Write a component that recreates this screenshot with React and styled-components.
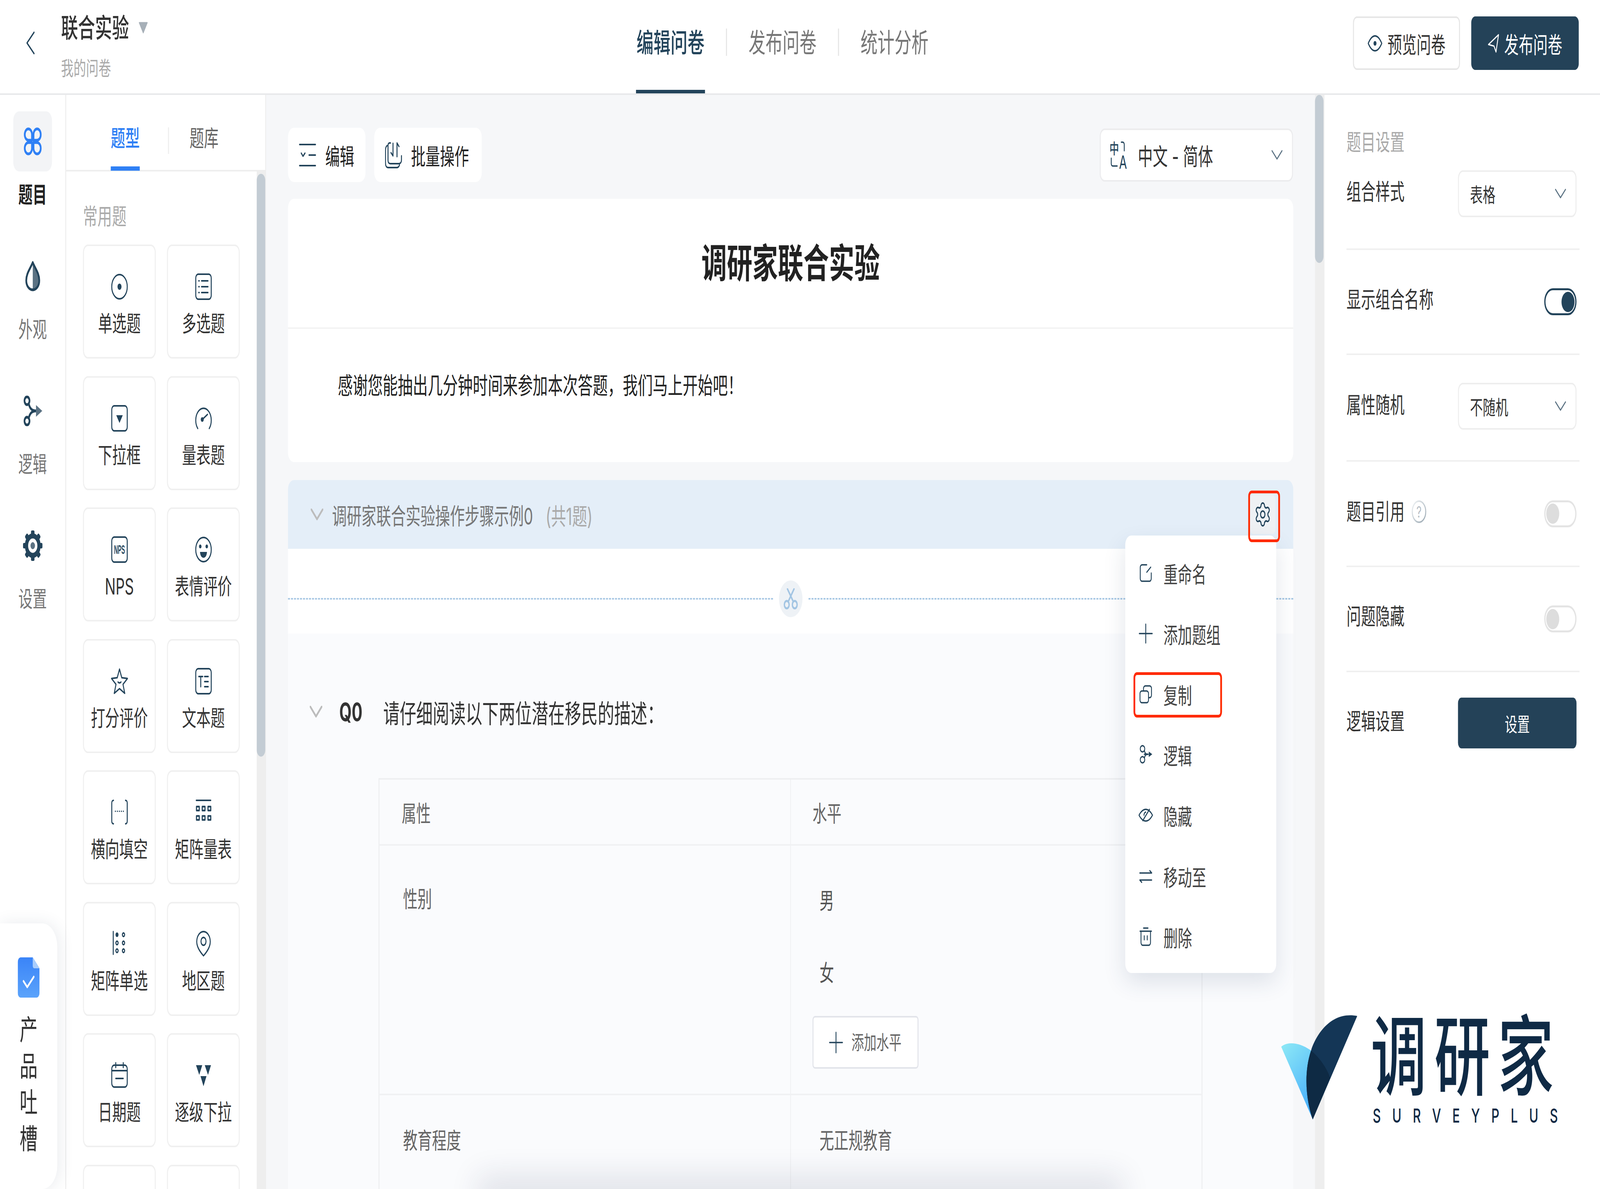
import React, { useState } from 'react';
import styled, { createGlobalStyle } from 'styled-components';
import { Settings } from 'lucide-react';

const INK = '#23445b';
const MID = '#5b7283';
const DESIGN_W = 6400;
const DESIGN_H = 3044;

const Global = createGlobalStyle`
  html, body { margin: 0; padding: 0; background: #fff; overflow: hidden; }
  * { box-sizing: border-box; }
  body { font-family: Inter, "Noto Sans CJK SC", sans-serif; color: #333; }
`;

/* The sandbox clamps the window below 6400px wide. The page is laid out at the
   reference's 6400x3044 and fitted to the window; at a real 6400x3044 window the
   factors are exactly 1. */
const Stage = styled.div`
  width: 100vw;
  height: 100vh;
  overflow: hidden;
`;
const Page = styled.div`
  position: relative;
  width: ${DESIGN_W}px;
  height: ${DESIGN_H}px;
  overflow: hidden;
  display: flex;
  flex-direction: column;
  background: #fff;
  transform-origin: 0 0;
`;

/* ---------- top bar ---------- */
const Header = styled.header`
  display: grid;
  grid-template-columns: 2544px auto 1fr;
  height: 243px;
  flex: none;
  border-bottom: 4px solid #e8e9eb;
  background: #fff;
`;
const HeadLeft = styled.div`
  display: flex;
  align-items: flex-start;
`;
const BackBtn = styled.div`
  width: 244px;
  height: 220px;
  display: flex;
  align-items: center;
  justify-content: center;
  svg { display: block; }
`;
const TitleBlock = styled.div`
  display: flex;
  flex-direction: column;
  padding-top: 31px;
`;
const TitleRow = styled.div`
  display: flex;
  align-items: center;
  gap: 38px;
  height: 80px;
`;
const DocTitle = styled.div`
  font-size: 68px;
  line-height: 80px;
  font-weight: 500;
  color: #333;
`;
const DocSub = styled.div`
  margin-top: 34px;
  font-size: 50px;
  line-height: 60px;
  color: #aaa;
`;
const StepTabs = styled.nav`
  display: flex;
  align-items: center;
  height: 239px;
`;
const StepTab = styled.div`
  height: 239px;
  padding: 0 2px 12px;
  display: flex;
  align-items: center;
  font-size: 68px;
  line-height: 80px;
  font-weight: ${p => (p.$active ? 500 : 400)};
  color: ${p => (p.$active ? INK : '#777')};
  border-bottom: 9px solid ${p => (p.$active ? INK : 'transparent')};
`;
const StepDivider = styled.span`
  width: 4px;
  height: 70px;
  margin: 0 84px 23px;
  background: #e4e4e4;
`;
const HeadRight = styled.div`
  display: flex;
  justify-content: flex-end;
  align-items: flex-start;
  gap: 45px;
  padding: 42px 85px 0 0;
`;
const HeadBtn = styled.div`
  width: ${p => p.$w}px;
  height: 137px;
  display: flex;
  align-items: center;
  justify-content: center;
  gap: 20px;
  border-radius: 16px;
  font-size: 58px;
  background: ${p => (p.$primary ? '#244258' : '#fff')};
  color: ${p => (p.$primary ? '#fff' : '#333')};
  border: ${p => (p.$primary ? 'none' : '4px solid #e6e6e6')};
`;

/* ---------- main ---------- */
const Main = styled.main`
  flex: 1;
  min-height: 0;
  display: flex;
`;

/* left rail */
const Rail = styled.aside`
  position: relative;
  width: 265px;
  flex: none;
  padding-top: 42px;
  border-right: 4px solid #eeeeee;
  display: flex;
  flex-direction: column;
  align-items: stretch;
`;
const RailItem = styled.div`
  height: 345px;
  display: flex;
  flex-direction: column;
  align-items: center;
`;
const RailIcon = styled.div`
  width: 155px;
  height: 154px;
  border-radius: 24px;
  display: flex;
  align-items: center;
  justify-content: center;
  background: ${p => (p.$active ? '#f3f4f6' : 'transparent')};
`;
const RailLabel = styled.div`
  margin-top: 25px;
  font-size: 57px;
  line-height: 70px;
  font-weight: ${p => (p.$active ? 700 : 400)};
  color: ${p => (p.$active ? '#222' : '#777')};
`;
const Feedback = styled.div`
  position: absolute;
  left: 0;
  bottom: 0;
  width: 229px;
  height: 680px;
  padding-top: 87px;
  background: #fff;
  border-radius: 0 60px 60px 0;
  box-shadow: 6px 0 50px rgba(40, 60, 90, 0.1);
  display: flex;
  flex-direction: column;
  align-items: center;
  z-index: 3;
`;
const FeedbackText = styled.div`
  margin-top: 35px;
  width: 72px;
  font-size: 72px;
  line-height: 93px;
  text-align: center;
  color: #333;
`;

/* question types panel */
const TypesPanel = styled.section`
  width: 800px;
  flex: none;
  display: flex;
  flex-direction: column;
  border-right: 4px solid #eeeeee;
  background: #fff;
`;
const TypesTabs = styled.div`
  height: 196px;
  flex: none;
  display: flex;
  align-items: flex-end;
  padding-left: 178px;
  border-bottom: 4px solid #eeeeee;
`;
const TypesTab = styled.div`
  height: 156px;
  margin-bottom: -2px;
  padding-bottom: 8px;
  display: flex;
  align-items: center;
  font-size: 58px;
  color: ${p => (p.$active ? '#2f80f5' : '#666')};
  font-weight: ${p => (p.$active ? 500 : 400)};
  border-bottom: 11px solid ${p => (p.$active ? '#2f80f5' : 'transparent')};
`;
const TypesDivider = styled.span`
  width: 4px;
  height: 68px;
  margin: 0 82px 41px 113px;
  background: #eeeeee;
`;
const TypesBody = styled.div`
  flex: 1;
  min-height: 0;
  display: flex;
`;
const TypesScroll = styled.div`
  flex: 1;
  padding: 80px 0 0 67px;
  overflow: hidden;
`;
const SectionLabel = styled.div`
  font-size: 58px;
  line-height: 70px;
  color: #aaa;
`;
const TypeGrid = styled.div`
  margin-top: 37px;
  display: grid;
  grid-template-columns: 291px 291px;
  grid-auto-rows: 292px;
  column-gap: 45px;
  row-gap: 44.5px;
`;
const TypeCard = styled.div`
  border: 4px solid #f0f0f0;
  border-radius: 20px;
  padding-top: 70px;
  display: flex;
  flex-direction: column;
  align-items: center;
  svg { display: block; flex: none; }
`;
const TypeName = styled.div`
  margin-top: 26px;
  font-size: 57px;
  line-height: 70px;
  color: #333;
  white-space: nowrap;
`;
const Scrollbar = styled.div`
  width: ${p => p.$w}px;
  flex: none;
  background: #eeeeee;
  padding-top: ${p => p.$top}px;
`;
const ScrollThumb = styled.div`
  width: 34px;
  height: ${p => p.$h}px;
  border-radius: 17px;
  background: #c3ccd4;
`;

/* editor */
const Editor = styled.section`
  flex: 1;
  min-width: 0;
  display: flex;
  background: #f6f7f9;
`;
const EditorScroll = styled.div`
  flex: 1;
  min-width: 0;
  padding: 84px 87px 0;
  overflow: hidden;
`;
const Toolbar = styled.div`
  display: flex;
  align-items: center;
  height: 139px;
  gap: 35px;
`;
const ToolBtn = styled.div`
  width: ${p => p.$w}px;
  height: 139px;
  background: #fff;
  border-radius: 24px;
  display: flex;
  align-items: center;
  gap: ${p => p.$gap}px;
  padding-left: ${p => p.$pad}px;
  font-size: 58px;
  color: #222;
`;
const LangSelect = styled.div`
  margin-left: auto;
  margin-right: 1px;
  width: 773px;
  height: 136px;
  background: #fff;
  border: 4px solid #ececee;
  border-radius: 20px;
  display: flex;
  align-items: center;
  padding: 0 38px 0 36px;
  font-size: 60px;
  color: #333;
`;
const LangText = styled.span`
  margin-left: 40px;
  flex: 1;
`;
const InfoCard = styled.div`
  margin-top: 43px;
  background: #fff;
  border-radius: 24px;
  height: 674px;
`;
const InfoTitle = styled.h1`
  margin: 0;
  height: 333px;
  border-bottom: 4px solid #f3f3f3;
  display: flex;
  align-items: center;
  justify-content: center;
  font-size: 102px;
  line-height: 120px;
  font-weight: 700;
  color: #222;
`;
const InfoText = styled.p`
  margin: 0;
  padding: 115px 0 0 199px;
  font-size: 60px;
  line-height: 60px;
  color: #222;
`;
const Group = styled.div`
  position: relative;
  margin-top: 46px;
`;
const GroupBar = styled.div`
  height: 176px;
  padding: 0 72px 0 91px;
  border-radius: 24px 24px 0 0;
  background: #e4eef8;
  display: flex;
  align-items: center;
`;
const GroupName = styled.span`
  margin-left: 35px;
  font-size: 59px;
  color: #777;
`;
const GroupCount = styled.span`
  margin-left: 50px;
  font-size: 60px;
  color: #aaa;
`;
const GearBtn = styled.div`
  position: relative;
  margin-left: auto;
  width: 100px;
  height: 100px;
  border-radius: 12px;
  background: #eef1f4;
  display: flex;
  align-items: center;
  justify-content: center;
`;
const RedBox = styled.span`
  position: absolute;
  left: ${p => p.$l}px;
  top: ${p => p.$t}px;
  width: ${p => p.$w}px;
  height: ${p => p.$h}px;
  border: 7px solid #ff2a00;
  border-radius: 14px;
  z-index: 6;
  pointer-events: none;
`;
const SplitRow = styled.div`
  height: 217px;
  background: #fff;
  padding-top: 81px;
  display: flex;
  align-items: flex-start;
`;
const DashLine = styled.span`
  flex: 1;
  margin-top: 45px;
  border-top: 4px dashed #a8c8e4;
`;
const CutBadge = styled.span`
  width: 94px;
  height: 94px;
  margin: 0 24px;
  border-radius: 50%;
  background: #eef2f6;
  display: flex;
  align-items: center;
  justify-content: center;
`;
const Question = styled.div`
  background: #fafbfd;
  padding: 150px 0 0 87px;
  height: 1500px;
`;
const QRow = styled.div`
  display: flex;
  align-items: center;
  height: 100px;
`;
const QNum = styled.span`
  margin-left: 68px;
  width: 176px;
  font-size: 64px;
  font-weight: 700;
  color: #333;
`;
const QText = styled.span`
  font-size: 66px;
  color: #333;
`;
const Table = styled.div`
  margin: 120px 0 0 275px;
  width: 3296px;
  border: solid #eeeff1;
  border-width: 4px 4px 0 4px;
`;
const TableRow = styled.div`
  display: grid;
  grid-template-columns: 1643px 1fr;
  min-height: ${p => p.$h}px;
  border-bottom: 4px solid #f0f1f3;
`;
const TableCell = styled.div`
  padding: ${p => p.$top}px 0 0 ${p => p.$left}px;
  font-size: 58px;
  line-height: 70px;
  color: #666;
  & + & { border-left: 3px solid #f0f1f3; }
`;
const LevelOption = styled.div`
  height: 185px;
  padding-left: 28px;
  display: flex;
  align-items: center;
  color: #555;
`;
const AddBtn = styled.div`
  margin-top: 18px;
  width: 424px;
  height: 135px;
  padding-left: 62px;
  background: #fff;
  border: 4px solid #e2e4ea;
  border-radius: 10px;
  display: flex;
  align-items: center;
  gap: 34px;
  font-size: 50px;
  color: #666;
`;

/* group menu */
const Menu = styled.div`
  position: absolute;
  left: 3349px;
  top: 142px;
  width: 604px;
  height: 1120px;
  padding-top: 18px;
  background: #fff;
  border-radius: 24px;
  box-shadow: 0 24px 70px rgba(40, 60, 100, 0.13);
  z-index: 5;
`;
const MenuItem = styled.div`
  position: relative;
  height: 155.2px;
  padding-left: 52px;
  display: flex;
  align-items: center;
  gap: 41px;
  font-size: 57px;
  color: #444;
`;
const MenuIcon = styled.span`
  width: 60px;
  display: flex;
  justify-content: center;
`;

/* settings */
const SettingsPanel = styled.aside`
  width: 1102px;
  flex: none;
  padding: 91px 82px 0 88px;
  background: #fff;
`;
const SettingsTitle = styled.div`
  font-size: 58px;
  line-height: 60px;
  color: #aaa;
`;
const SettingRow = styled.div`
  display: flex;
  align-items: center;
  justify-content: space-between;
  height: ${p => p.$h}px;
  padding: ${p => p.$pt || 0}px 12px ${p => p.$pb || 0}px 0;
  border-bottom: ${p => (p.$last ? 'none' : '4px solid #f0f0f0')};
`;
const SettingLabel = styled.div`
  display: flex;
  align-items: center;
  gap: 28px;
  padding-bottom: ${p => p.$up || 0}px;
  font-size: 58px;
  line-height: 70px;
  color: #333;
`;
const SelectBox = styled.div`
  width: 474px;
  height: 120px;
  margin-bottom: ${p => p.$mb || 0}px;
  border: 4px solid #eeeeee;
  border-radius: 20px;
  padding: 0 38px 0 44px;
  display: flex;
  align-items: center;
  justify-content: space-between;
  font-size: 51px;
  color: #333;
`;
const Toggle = styled.div`
  width: 129px;
  height: 69px;
  border-radius: 35px;
  border: 5px solid ${p => (p.$on ? INK : '#e4e4e4')};
  display: flex;
  align-items: center;
  justify-content: ${p => (p.$on ? 'flex-end' : 'flex-start')};
  padding: 0 3px;
`;
const Knob = styled.span`
  width: 52px;
  height: 52px;
  border-radius: 50%;
  background: ${p => (p.$on ? INK : '#dddddd')};
`;
const PrimaryBtn = styled.div`
  width: 474px;
  height: 130px;
  border-radius: 14px;
  background: #244258;
  color: #fff;
  font-size: 50px;
  display: flex;
  align-items: center;
  justify-content: center;
`;

/* watermark */
const Logo = styled.div`
  position: absolute;
  left: 5125px;
  top: 2598px;
  display: flex;
  gap: 62px;
  z-index: 8;
`;
const LogoWords = styled.div`
  display: flex;
  flex-direction: column;
  width: 770px;
`;
const LogoCn = styled.div`
  margin-left: -8px;
  font-size: 224px;
  line-height: 214px;
  letter-spacing: 30px;
  font-weight: 500;
  color: #0f2a45;
  white-space: nowrap;
`;
const LogoEn = styled.div`
  margin-top: 22px;
  font-size: 50px;
  line-height: 44px;
  font-weight: 500;
  letter-spacing: 45.5px;
  color: #0f2a45;
  white-space: nowrap;
`;
const BottomHaze = styled.div`
  position: absolute;
  left: 1950px;
  bottom: -30px;
  width: 2500px;
  height: 30px;
  box-shadow: 0 0 90px 40px rgba(30, 40, 80, 0.1);
  z-index: 2;
`;

/* ---------- icons ---------- */
const Ico = ({ w = 68, h, children, ...rest }) => (
  <svg width={w} height={h || w} viewBox={`0 0 ${w} ${h || w}`} fill="none" stroke={INK} strokeWidth="4" strokeLinecap="round" strokeLinejoin="round" {...rest}>
    {children}
  </svg>
);

const Chevron = ({ w = 44, h = 26, color = MID, sw = 3.5 }) => (
  <svg width={w} height={h} viewBox={`0 0 ${w} ${h}`} fill="none" stroke={color} strokeWidth={sw} strokeLinecap="round" strokeLinejoin="round">
    <polyline points={`2,2 ${w / 2},${h - 3} ${w - 2},2`} />
  </svg>
);

const Clover = () => (
  <svg width="72" height="72" viewBox="0 0 72 72" fill="none" stroke="#2f80f5" strokeWidth="7" strokeLinejoin="round">
    <path d="M33 33 V18 A14.5 14.5 0 1 0 18 33 Z" />
    <path d="M39 33 V18 A14.5 14.5 0 1 1 54 33 Z" />
    <path d="M33 39 V54 A14.5 14.5 0 1 1 18 39 Z" />
    <path d="M39 39 V54 A14.5 14.5 0 1 0 54 39 Z" />
  </svg>
);
const Drop = () => (
  <svg width="60" height="78" viewBox="0 0 60 78" fill="none">
    <path d="M30 4 C40 20 56 32 56 50 C56 64 44 74 30 74 Z" fill={MID} />
    <path d="M30 4 C20 20 4 32 4 50 C4 64 16 74 30 74 C44 74 56 64 56 50 C56 32 40 20 30 4 Z" stroke={INK} strokeWidth="7" strokeLinejoin="round" />
  </svg>
);
const LogicIcon = () => (
  <svg width="76" height="78" viewBox="0 0 76 78" fill="none">
    <circle cx="15" cy="13" r="10" stroke={INK} strokeWidth="7" />
    <circle cx="15" cy="65" r="10" stroke={INK} strokeWidth="7" />
    <path d="M22 20 C26 34 36 39 52 39 C36 39 26 44 22 58" stroke={INK} strokeWidth="7" />
    <path d="M51 24 L76 39 L51 54 Z" fill={MID} />
  </svg>
);
const GearSolid = () => (
  <svg width="78" height="78" viewBox="0 0 78 78" fill="none">
    {[0, 45, 90, 135, 180, 225, 270, 315].map(a => (
      <rect key={a} x="32" y="0" width="14" height="16" rx="4" fill={INK} transform={`rotate(${a} 39 39)`} />
    ))}
    <circle cx="39" cy="39" r="25" stroke={INK} strokeWidth="13" />
    <circle cx="39" cy="39" r="9" fill={MID} />
  </svg>
);
const FileCheck = () => (
  <svg width="87" height="103" viewBox="0 0 87 103" fill="none">
    <defs>
      <linearGradient id="fileGrad" x1="0" y1="0" x2="0" y2="1">
        <stop offset="0" stopColor="#3a84f8" />
        <stop offset="1" stopColor="#5ba3fb" />
      </linearGradient>
    </defs>
    <path d="M12 0 H60 L87 28 V91 A12 12 0 0 1 75 103 H12 A12 12 0 0 1 0 91 V12 A12 12 0 0 1 12 0 Z" fill="url(#fileGrad)" />
    <path d="M60 0 L87 28 H66 A6 6 0 0 1 60 22 Z" fill="#a9cdfc" />
    <path d="M23 61 L38 76 L64 50" stroke="#fff" strokeWidth="6" strokeLinecap="round" strokeLinejoin="round" />
  </svg>
);

const IRect = () => <rect x="3" y="2" width="62" height="64" rx="10" />;
const typeIcons = {
  radio: <Ico><circle cx="34" cy="34" r="31" /><circle cx="34" cy="34" r="8" fill={INK} stroke="none" /></Ico>,
  multi: <Ico><IRect /><path d="M26 19 H52 M26 34 H52 M26 49 H52" /><path d="M15 19 H17 M15 34 H17 M15 49 H17" /></Ico>,
  drop: <Ico><IRect /><path d="M21 26 H47 L34 46 Z" fill={INK} stroke="none" /></Ico>,
  gauge: <Ico><path d="M11 60 A31 31 0 1 1 57 60" /><path d="M29 37 L50 24" /><circle cx="29" cy="37" r="6" fill={INK} stroke="none" /></Ico>,
  nps: <Ico overflow="visible"><IRect /><g transform="translate(34 45) scale(0.66 1)"><text x="0" y="0" fill={INK} stroke="none" fontFamily="'Liberation Sans', sans-serif" fontWeight="700" fontSize="32" textAnchor="middle">NPS</text></g></Ico>,
  smile: <Ico><circle cx="34" cy="34" r="31" /><circle cx="21" cy="26" r="5" fill={INK} stroke="none" /><circle cx="47" cy="26" r="5" fill={INK} stroke="none" /><path d="M20 40 H48 C47 50 41 55 34 55 C27 55 21 50 20 40 Z" fill={INK} stroke="none" /></Ico>,
  star: <Ico><path d="M34 3 L43 25 L66 27 L48 42 L55 65 L34 53 L13 65 L20 42 L2 27 L25 25 Z" /><path d="M28 36 C30 39 38 39 40 36" /></Ico>,
  text: <Ico><IRect /><path d="M15 22 H31 M23 22 V48 M38 22 H53 M38 35 H53 M38 48 H53" /></Ico>,
  blank: <Ico><path d="M10 3 C6 3 3 6 3 10 V56 C3 60 6 63 10 63 M58 3 C62 3 65 6 65 10 V56 C65 60 62 63 58 63" /><path d="M17 31 H18 M25 31 H26 M33 31 H34 M41 31 H42 M49 31 H50" strokeWidth="3.5" /></Ico>,
  matrix: <Ico><path d="M5 3 H63" /><g strokeWidth="4.5"><rect x="6" y="19" width="11" height="10" /><rect x="29" y="19" width="11" height="10" /><rect x="52" y="19" width="11" height="10" /><rect x="6" y="43" width="11" height="10" /><rect x="29" y="43" width="11" height="10" /><rect x="52" y="43" width="11" height="10" /></g></Ico>,
  matrixR: <Ico><path d="M9 2 V60" /><circle cx="24" cy="10" r="6" fill={INK} stroke="none" /><circle cx="50" cy="10" r="4.5" /><circle cx="24" cy="31" r="4.5" /><circle cx="50" cy="31" r="4.5" /><circle cx="24" cy="51" r="4.5" /><circle cx="50" cy="51" r="4.5" /></Ico>,
  pin: <Ico><path d="M34 64 C26 58 7 44 7 28 A27 26 0 0 1 61 28 C61 44 42 58 34 64 Z" /><circle cx="34" cy="27" r="10" /></Ico>,
  date: <Ico><rect x="3" y="8" width="62" height="56" rx="10" /><path d="M3 22 H65 M19 2 V14 M49 2 V14 M19 42 H49" /></Ico>,
  casc: <Ico><path d="M4 8 H29 L17 33 Z M39 8 H64 L52 33 Z M22 36 H46 L34 62 Z" fill={INK} stroke="none" /></Ico>,
};

const Scissors = () => (
  <svg width="58" height="54" viewBox="0 0 58 54" fill="none" stroke="#a3c5e3" strokeWidth="5.5" strokeLinecap="round">
    <circle cx="13" cy="42" r="9.5" />
    <circle cx="45" cy="42" r="9.5" />
    <path d="M19 34 L42 2 M39 34 L16 2" />
  </svg>
);

const menuIcons = {
  rename: <Ico w={52} strokeWidth="3.5"><path d="M30 5 H11 A7 7 0 0 0 4 12 V40 A7 7 0 0 0 11 47 H41 A7 7 0 0 0 48 40 V26" /><path d="M30 24 L46 11" /></Ico>,
  add: <Ico w={56} strokeWidth="3.5"><path d="M28 4 V52 M2 28 H54" /></Ico>,
  copy: <Ico w={52} strokeWidth="3.5"><rect x="3" y="18" width="34" height="30" rx="7" /><path d="M17 17 V12 A7 7 0 0 1 24 5 H42 A7 7 0 0 1 49 12 V28 A7 7 0 0 1 42 35 H38" /></Ico>,
  logic: <Ico w={52} strokeWidth="3.5"><ellipse cx="13" cy="11" rx="9" ry="8" /><ellipse cx="13" cy="39" rx="9" ry="8" /><path d="M21 16 C23 24 28 25 36 25 H20" /><path d="M21 34 C23 28 26 25 34 25" /><path d="M38 18 L52 25 L38 32 Z" fill={INK} stroke="none" /></Ico>,
  hide: <Ico w={60} h={44} strokeWidth="3.5"><path d="M3 22 C12 11 20 7 30 7 C40 7 48 11 57 22 C48 33 40 37 30 37 C20 37 12 33 3 22 Z" /><path d="M18 36 L45 7" /><path d="M23 22 A8 8 0 0 1 30 14" /></Ico>,
  move: <Ico w={52} h={40} strokeWidth="3.5"><path d="M2 12 H50 L42 6" /><path d="M50 30 H2 L10 36" /></Ico>,
  del: <Ico w={52} strokeWidth="3.5"><path d="M3 12 H49 M17 4 H35" /><path d="M7 12 V41 A7 7 0 0 0 14 48 H38 A7 7 0 0 0 45 41 V12" /><path d="M20 24 V34 M32 24 V34" /></Ico>,
};

const Translate = () => (
  <svg width="72" height="72" viewBox="0 0 72 72" fill="none" stroke={INK} strokeWidth="3.5" strokeLinecap="round" overflow="visible">
    <text x="-1" y="33" fill={INK} stroke="none" fontFamily="'Noto Sans CJK SC', sans-serif" fontSize="38" fontWeight="500">中</text>
    <text x="37" y="71" fill={INK} stroke="none" fontFamily="Inter, sans-serif" fontSize="46">A</text>
    <path d="M46 3 H52 A6 6 0 0 1 58 9 V25" />
    <path d="M6 44 V58 A6 6 0 0 0 12 64 H30" />
  </svg>
);

const LogoMark = () => (
  <svg width="304" height="268" viewBox="0 0 304 268">
    <defs>
      <linearGradient id="bladeL" x1="0.1" y1="0" x2="0.7" y2="0.8">
        <stop offset="0" stopColor="#8ae6f6" />
        <stop offset="1" stopColor="#47aefb" />
      </linearGradient>
      <clipPath id="bladeClip">
        <path d="M126 268 C100 220 88 150 120 90 C140 50 200 -10 304 3 Z" />
      </clipPath>
    </defs>
    <path d="M0 82 C15 72 60 65 118 91 C155 110 185 140 195 161 L126 268 Z" fill="url(#bladeL)" />
    <path d="M126 268 C100 220 88 150 120 90 C140 50 200 -10 304 3 Z" fill="#143656" />
    <path d="M0 82 C15 72 60 65 118 91 C155 110 185 140 195 161 L126 268 Z" fill="#0e2a44" clipPath="url(#bladeClip)" />
  </svg>
);

const Help = () => (
  <svg width="60" height="62" viewBox="0 0 60 62" fill="none" overflow="visible">
    <defs>
      <linearGradient id="helpGrad" x1="0" y1="0" x2="1" y2="1">
        <stop offset="0" stopColor="#f1f4f6" />
        <stop offset="1" stopColor="#9aa8b2" />
      </linearGradient>
    </defs>
    <circle cx="30" cy="31" r="27" stroke="url(#helpGrad)" strokeWidth="4" />
    <text x="30" y="46" fill="#b4bcc4" fontFamily="Inter, sans-serif" fontSize="40" textAnchor="middle">?</text>
  </svg>
);

/* ---------- data ---------- */
const TYPES = [
  ['radio', '单选题'], ['multi', '多选题'],
  ['drop', '下拉框'], ['gauge', '量表题'],
  ['nps', 'NPS'], ['smile', '表情评价'],
  ['star', '打分评价'], ['text', '文本题'],
  ['blank', '横向填空'], ['matrix', '矩阵量表'],
  ['matrixR', '矩阵单选'], ['pin', '地区题'],
  ['date', '日期题'], ['casc', '逐级下拉'],
  [null, ''], [null, ''],
];
const MENU = [
  ['rename', '重命名'], ['add', '添加题组'], ['copy', '复制'], ['logic', '逻辑'],
  ['hide', '隐藏'], ['move', '移动至'], ['del', '删除'],
];

export default function App() {
  const [fit] = useState(() => ({ x: window.innerWidth / DESIGN_W, y: window.innerHeight / DESIGN_H }));
  return (
    <Stage>
      <Global />
      <Page style={{ transform: `scale(${fit.x}, ${fit.y})` }}>
        <Header>
          <HeadLeft>
            <BackBtn>
              <Ico w={34} h={60} strokeWidth="4.5"><polyline points="31,3 3,30 31,57" /></Ico>
            </BackBtn>
            <TitleBlock>
              <TitleRow>
                <DocTitle>联合实验</DocTitle>
                <svg width="38" height="30" viewBox="0 0 38 30"><path d="M3 2 H35 L19 28 Z" fill="#a7b0b8" stroke="#a7b0b8" strokeWidth="3" strokeLinejoin="round" /></svg>
              </TitleRow>
              <DocSub>我的问卷</DocSub>
            </TitleBlock>
          </HeadLeft>
          <StepTabs>
            <StepTab $active>编辑问卷</StepTab>
            <StepDivider />
            <StepTab>发布问卷</StepTab>
            <StepDivider />
            <StepTab>统计分析</StepTab>
          </StepTabs>
          <HeadRight>
            <HeadBtn $w={428}>
              <Ico w={60} h={46}><path d="M3 23 C12 9 21 4 30 4 C39 4 48 9 57 23 C48 37 39 42 30 42 C21 42 12 37 3 23 Z" /><circle cx="30" cy="23" r="6" fill={INK} stroke="none" /></Ico>
              预览问卷
            </HeadBtn>
            <HeadBtn $w={430} $primary>
              <svg width="46" height="50" viewBox="0 0 46 50" fill="none" stroke="#fff" strokeWidth="3.5" strokeLinejoin="round"><path d="M43 3 L3 28 L25 32 L33 47 Z" /></svg>
              发布问卷
            </HeadBtn>
          </HeadRight>
        </Header>

        <Main>
          <Rail>
            <RailItem>
              <RailIcon $active><Clover /></RailIcon>
              <RailLabel $active>题目</RailLabel>
            </RailItem>
            <RailItem>
              <RailIcon><Drop /></RailIcon>
              <RailLabel>外观</RailLabel>
            </RailItem>
            <RailItem>
              <RailIcon><LogicIcon /></RailIcon>
              <RailLabel>逻辑</RailLabel>
            </RailItem>
            <RailItem>
              <RailIcon><GearSolid /></RailIcon>
              <RailLabel>设置</RailLabel>
            </RailItem>
            <Feedback>
              <FileCheck />
              <FeedbackText>产品吐槽</FeedbackText>
            </Feedback>
          </Rail>

          <TypesPanel>
            <TypesTabs>
              <TypesTab $active>题型</TypesTab>
              <TypesDivider />
              <TypesTab>题库</TypesTab>
            </TypesTabs>
            <TypesBody>
              <TypesScroll>
                <SectionLabel>常用题</SectionLabel>
                <TypeGrid>
                  {TYPES.map(([icon, name], i) => (
                    <TypeCard key={i}>
                      {icon && typeIcons[icon]}
                      {name && <TypeName>{name}</TypeName>}
                    </TypeCard>
                  ))}
                </TypeGrid>
              </TypesScroll>
              <Scrollbar $w={34} $top={6}><ScrollThumb $h={1492} /></Scrollbar>
            </TypesBody>
          </TypesPanel>

          <Editor>
            <EditorScroll>
              <Toolbar>
                <ToolBtn $w={310} $pad={44} $gap={37}>
                  <Ico w={68} h={60}><path d="M2 3 H66 M2 57 H66 M9 25 L16 33 L24 25 M40 30 H66" /></Ico>
                  编辑
                </ToolBtn>
                <ToolBtn $w={430} $pad={43} $gap={36}>
                  <Ico w={68} h={68}>
                    <path d="M8 10 C4 12 2 16 2 22 V55 C2 62 6 66 13 66 H47 C52 66 56 64 58 59" />
                    <path d="M22 3 H18 C14 3 12 6 12 10 V47 C12 53 16 56 21 56 H55 C62 56 66 52 66 46 V36" />
                    <path d="M32 4 V36 L24 28 M48 38 V3 L56 12" />
                  </Ico>
                  批量操作
                </ToolBtn>
                <LangSelect>
                  <Translate />
                  <LangText>中文 - 简体</LangText>
                  <Chevron />
                </LangSelect>
              </Toolbar>

              <InfoCard>
                <InfoTitle>调研家联合实验</InfoTitle>
                <InfoText>感谢您能抽出几分钟时间来参加本次答题，我们马上开始吧！</InfoText>
              </InfoCard>

              <Group>
                <GroupBar>
                  <Chevron w={50} h={30} color="#bcbcbc" sw={6} />
                  <GroupName>调研家联合实验操作步骤示例0</GroupName>
                  <GroupCount>(共1题)</GroupCount>
                  <GearBtn>
                    <Settings size={70} color={INK} strokeWidth={1.4} />
                    <RedBox $l={-8} $t={-11} $w={127} $h={132} />
                  </GearBtn>
                </GroupBar>
                <SplitRow>
                  <DashLine />
                  <CutBadge><Scissors /></CutBadge>
                  <DashLine />
                </SplitRow>
                <Question>
                  <QRow>
                    <Chevron w={50} h={30} color="#bcbcbc" sw={6} />
                    <QNum>Q0</QNum>
                    <QText>请仔细阅读以下两位潜在移民的描述：</QText>
                  </QRow>
                  <Table>
                    <TableRow $h={169}>
                      <TableCell $top={52} $left={89}>属性</TableCell>
                      <TableCell $top={52} $left={86}>水平</TableCell>
                    </TableRow>
                    <TableRow $h={639}>
                      <TableCell $top={102} $left={94}>性别</TableCell>
                      <TableCell $top={48} $left={86}>
                        <LevelOption>男</LevelOption>
                        <LevelOption>女</LevelOption>
                        <AddBtn>
                          <Ico w={56} strokeWidth="3.5"><path d="M28 2 V54 M2 28 H54" /></Ico>
                          添加水平
                        </AddBtn>
                      </TableCell>
                    </TableRow>
                    <TableRow $h={400}>
                      <TableCell $top={81} $left={94}>教育程度</TableCell>
                      <TableCell $top={81} $left={114}>无正规教育</TableCell>
                    </TableRow>
                  </Table>
                </Question>
                <Menu>
                  {MENU.map(([icon, name]) => (
                    <MenuItem key={icon}>
                      <MenuIcon>{menuIcons[icon]}</MenuIcon>
                      {name}
                      {icon === 'copy' && <RedBox $l={33} $t={22} $w={354} $h={116} />}
                    </MenuItem>
                  ))}
                </Menu>
              </Group>
            </EditorScroll>
            <Scrollbar $w={38} $top={0}><ScrollThumb $h={430} /></Scrollbar>
          </Editor>

          <SettingsPanel>
            <SettingsTitle>题目设置</SettingsTitle>
            <SettingRow $h={246} $pt={43} $pb={81}>
              <SettingLabel $up={10}>组合样式</SettingLabel>
              <SelectBox>表格<Chevron /></SelectBox>
            </SettingRow>
            <SettingRow $h={269}>
              <SettingLabel $up={12}>显示组合名称</SettingLabel>
              <Toggle $on><Knob $on /></Toggle>
            </SettingRow>
            <SettingRow $h={273}>
              <SettingLabel $up={14}>属性随机</SettingLabel>
              <SelectBox $mb={8}>不随机<Chevron /></SelectBox>
            </SettingRow>
            <SettingRow $h={270}>
              <SettingLabel $up={10}>题目引用<Help /></SettingLabel>
              <Toggle><Knob /></Toggle>
            </SettingRow>
            <SettingRow $h={269}>
              <SettingLabel $up={14}>问题隐藏</SettingLabel>
              <Toggle><Knob /></Toggle>
            </SettingRow>
            <SettingRow $h={260} $last>
              <SettingLabel $up={8}>逻辑设置</SettingLabel>
              <PrimaryBtn>设置</PrimaryBtn>
            </SettingRow>
          </SettingsPanel>
        </Main>

        <BottomHaze />
        <Logo>
          <LogoMark />
          <LogoWords>
            <LogoCn>调研家</LogoCn>
            <LogoEn>SURVEYPLUS</LogoEn>
          </LogoWords>
        </Logo>
      </Page>
    </Stage>
  );
}
